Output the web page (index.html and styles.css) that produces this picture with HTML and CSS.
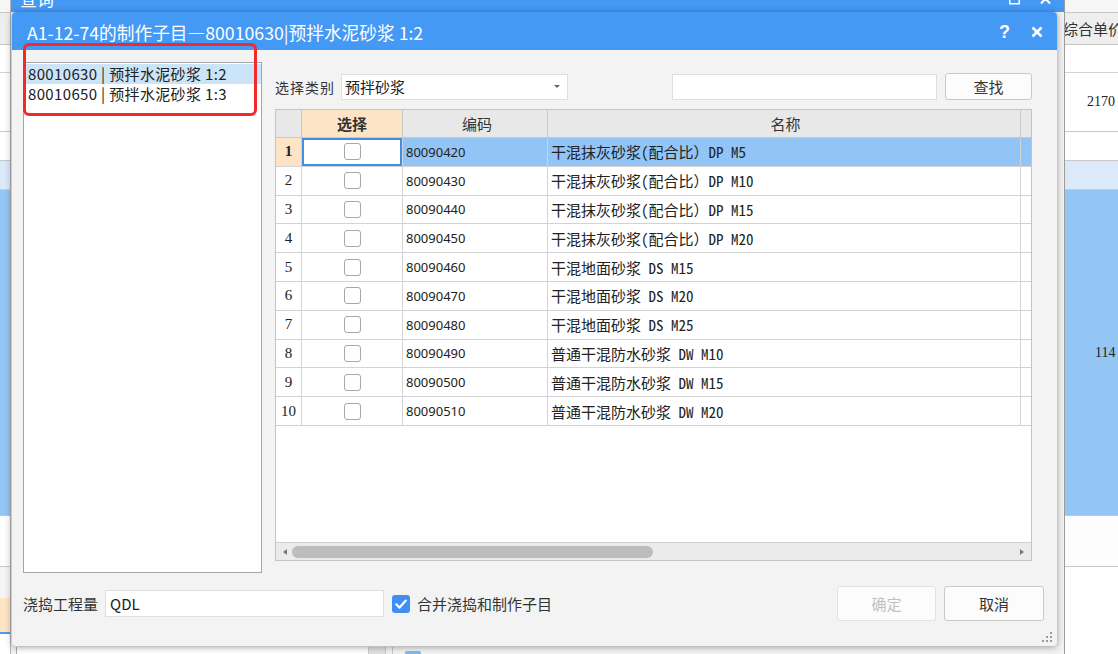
FILE: index.html
```html
<!DOCTYPE html>
<html lang="zh-CN">
<head>
<meta charset="utf-8">
<title>制作子目</title>
<link rel="stylesheet" href="styles.css">
</head>
<body>
<div class="app">
  <div class="app-top"></div>
  <div class="app-row app-head"><span></span><span class="app-txt">综合单价</span></div>
  <div class="app-row app-r1"></div>
  <div class="app-row app-r2"><span></span><span class="app-num n1">2170</span></div>
  <div class="app-row app-r3"></div>
  <div class="app-row app-r4"></div>
  <div class="app-row app-r5"><span></span><span class="app-num n2">114</span></div>
  <div class="app-row app-r6"></div>
  <div class="app-row app-r7"><span class="app-left l7"></span><span></span></div>
  <div class="app-row app-r8"><span class="app-left l8"></span><span></span></div>
  <div class="app-fill"></div>
</div>

<div class="outer">
  <div class="outer-title">
    <span class="outer-title-text">查询</span>
    <svg class="outer-icons" width="50" height="12" viewBox="0 0 50 12">
      <rect x="6.75" y="-6" width="9.5" height="9.75" fill="none" stroke="#fff" stroke-width="1.5"/>
      <path d="M38 -6 L47 3.5 M47 -6 L38 3.5" stroke="#fff" stroke-width="2" fill="none"/>
    </svg>
  </div>
  <div class="outer-body">
    <div class="outer-foot">
      <div class="outer-panel"><span class="outer-frag">清单工程量</span><span class="outer-btn"></span></div>
      <div class="outer-panel2"><span class="outer-ico"></span></div>
    </div>
  </div>
</div>

<div class="dialog">
  <div class="dlg-title">
    <span class="dlg-title-text">A1-12-74的制作子目—80010630|预拌水泥砂浆 1:2</span>
    <span class="dlg-help">?</span>
    <svg class="dlg-close" width="12" height="12" viewBox="0 0 12 12">
      <path d="M1.5 1.5 L10.5 10.5 M10.5 1.5 L1.5 10.5" stroke="#fff" stroke-width="2.6" fill="none"/>
    </svg>
  </div>
  <div class="dlg-body">
    <div class="main">
      <div class="list">
        <div class="list-item selected">80010630 | 预拌水泥砂浆 1:2</div>
        <div class="list-item">80010650 | 预拌水泥砂浆 1:3</div>
      </div>
      <div class="right">
        <div class="toolbar">
          <span class="tb-label">选择类别</span>
          <div class="combo"><span>预拌砂浆</span><i class="combo-arrow"></i></div>
          <div class="search"></div>
          <div class="btn find">查找</div>
        </div>
        <div class="table">
          <div class="trow thead">
            <div class="c c-no"></div>
            <div class="c c-sel hsel">选择</div>
            <div class="c c-code hc">编码</div>
            <div class="c c-name hc">名称</div>
            <div class="c c-x"></div>
          </div>
          <div class="trow active">
            <div class="c c-no">1</div>
            <div class="c c-sel"><span class="cb"></span></div>
            <div class="c c-code">80090420</div>
            <div class="c c-name">干混抹灰砂浆(配合比）DP M5</div>
            <div class="c c-x"></div>
          </div>
          <div class="trow">
            <div class="c c-no">2</div>
            <div class="c c-sel"><span class="cb"></span></div>
            <div class="c c-code">80090430</div>
            <div class="c c-name">干混抹灰砂浆(配合比）DP M10</div>
            <div class="c c-x"></div>
          </div>
          <div class="trow">
            <div class="c c-no">3</div>
            <div class="c c-sel"><span class="cb"></span></div>
            <div class="c c-code">80090440</div>
            <div class="c c-name">干混抹灰砂浆(配合比）DP M15</div>
            <div class="c c-x"></div>
          </div>
          <div class="trow">
            <div class="c c-no">4</div>
            <div class="c c-sel"><span class="cb"></span></div>
            <div class="c c-code">80090450</div>
            <div class="c c-name">干混抹灰砂浆(配合比）DP M20</div>
            <div class="c c-x"></div>
          </div>
          <div class="trow">
            <div class="c c-no">5</div>
            <div class="c c-sel"><span class="cb"></span></div>
            <div class="c c-code">80090460</div>
            <div class="c c-name">干混地面砂浆 DS M15</div>
            <div class="c c-x"></div>
          </div>
          <div class="trow">
            <div class="c c-no">6</div>
            <div class="c c-sel"><span class="cb"></span></div>
            <div class="c c-code">80090470</div>
            <div class="c c-name">干混地面砂浆 DS M20</div>
            <div class="c c-x"></div>
          </div>
          <div class="trow">
            <div class="c c-no">7</div>
            <div class="c c-sel"><span class="cb"></span></div>
            <div class="c c-code">80090480</div>
            <div class="c c-name">干混地面砂浆 DS M25</div>
            <div class="c c-x"></div>
          </div>
          <div class="trow">
            <div class="c c-no">8</div>
            <div class="c c-sel"><span class="cb"></span></div>
            <div class="c c-code">80090490</div>
            <div class="c c-name">普通干混防水砂浆 DW M10</div>
            <div class="c c-x"></div>
          </div>
          <div class="trow">
            <div class="c c-no">9</div>
            <div class="c c-sel"><span class="cb"></span></div>
            <div class="c c-code">80090500</div>
            <div class="c c-name">普通干混防水砂浆 DW M15</div>
            <div class="c c-x"></div>
          </div>
          <div class="trow">
            <div class="c c-no">10</div>
            <div class="c c-sel"><span class="cb"></span></div>
            <div class="c c-code">80090510</div>
            <div class="c c-name">普通干混防水砂浆 DW M20</div>
            <div class="c c-x"></div>
          </div>
          <div class="tspacer"></div>
          <div class="hscroll">
            <i class="arr-l"></i>
            <span class="thumb"></span>
            <i class="arr-r"></i>
          </div>
        </div>
      </div>
    </div>
    <div class="bottom">
      <span class="b-label">浇捣工程量</span>
      <div class="qty">QDL</div>
      <span class="chk">
        <svg width="18" height="18" viewBox="0 0 18 18"><path d="M4.2 9.2 L7.6 12.6 L13.8 5.6" stroke="#fff" stroke-width="2.2" fill="none" stroke-linecap="round" stroke-linejoin="round"/></svg>
      </span>
      <span class="chk-label">合并浇捣和制作子目</span>
      <div class="btn ok">确定</div>
      <div class="btn cancel">取消</div>
    </div>
  </div>
  <div class="redbox"></div>
  <svg class="grip" width="11" height="11" viewBox="0 0 11 11">
    <rect x="8" y="0" width="2" height="2" fill="#9a9a9a"/>
    <rect x="4" y="4" width="2" height="2" fill="#9a9a9a"/>
    <rect x="8" y="4" width="2" height="2" fill="#9a9a9a"/>
    <rect x="0" y="8" width="2" height="2" fill="#9a9a9a"/>
    <rect x="4" y="8" width="2" height="2" fill="#9a9a9a"/>
    <rect x="8" y="8" width="2" height="2" fill="#9a9a9a"/>
  </svg>
</div>
</body>
</html>
```

FILE: styles.css
```css
* { box-sizing: border-box; margin: 0; padding: 0; }
html, body { width: 1118px; height: 654px; overflow: hidden; }
body {
  position: relative;
  background: #fff;
  font-family: "Noto Sans CJK SC", "Microsoft YaHei", sans-serif;
  font-size: 15px;
  color: #333;
}

/* ---------- background application ---------- */
.app { display: flex; flex-direction: column; height: 654px; }
.app-top { height: 13px; background: #f6f6f6; border-bottom: 1px solid #c8c8c8; }
.app-row {
  display: grid;
  grid-template-columns: 1063px 1fr;
  align-items: center;
  border-bottom: 1px solid #d4d4d4;
  white-space: nowrap;
  overflow: hidden;
}
.app-head { height: 32px; background: #eeeeee; border-bottom-color: #c6c6c6; }
.app-txt { font-size: 15px; color: #333; }
.app-r1 { height: 28px; }
.app-r2 { height: 59px; border-bottom-color: #c8c8c8; }
.app-r3 { height: 29px; border-bottom-color: #c8c8c8; }
.app-r4 { height: 29px; background: #dce9fb; border-bottom-color: #c4cfdc; }
.app-r5 { height: 326px; background: #93c6f5; border-bottom-color: #c8c8c8; }
.app-r6 { height: 51px; background: #fdfdfd; border-bottom-color: #c8c8c8; }
.app-r7 { height: 31px; background: #fff; border-bottom: none; align-items: stretch; }
.app-r8 { height: 36px; background: #fff; border-bottom: none; align-items: stretch; }
.app-left { display: block; }
.l7 { background: #f4f4f4; }
.l8 { background: #fde4c4; border-bottom: 2px solid #4a9af5; }
.app-fill { flex: 1; background: #fff; }
.app-num { font-family: "Liberation Serif", serif; font-size: 14px; color: #222; }
.n1 { padding-left: 24px; }
.n2 { padding-left: 32px; }

/* ---------- outer window ---------- */
.outer {
  position: absolute;
  left: 10px; top: 0;
  width: 1055px; height: 654px;
  background: #f3f3f3;
  border-left: 1px solid #b4b4b4;
  border-right: 1px solid #9c9c9c;
  display: flex;
  flex-direction: column;
}
.outer-title {
  height: 12px;
  flex: none;
  background: #4499f5;
  color: #fff;
  display: flex;
  overflow: hidden;
  padding: 0 11px 0 9px;
}
.outer-title-text { font-size: 17px; line-height: 20px; margin-top: -11px; }
.outer-icons { margin-left: auto; }
.outer-body { flex: 1; padding-top: 635px; }
.outer-foot { display: flex; height: 10px; }
.outer-panel {
  margin-left: 5px;
  width: 370px;
  background: #fff;
  border-left: 1px solid #a8a8a8;
  border-right: 1px solid #c8c8c8;
  display: flex;
  overflow: hidden;
}
.outer-frag { font-size: 15px; line-height: 20px; margin-top: 4px; padding-left: 38px; color: #333; }
.outer-btn { margin-left: auto; width: 17px; background: #e2e2e2; border-left: 1px solid #ccc; }
.outer-panel2 { margin-left: 6px; border-left: 1px solid #c8c8c8; padding-left: 12px; }
.outer-ico { display: block; width: 16px; height: 10px; margin-top: 4px; background: #8ab8ec; border-radius: 2px; }

/* ---------- dialog ---------- */
.dialog {
  position: absolute;
  left: 12px; top: 12px;
  width: 1045px; height: 634px;
  background: #f3f3f3;
  border-radius: 4px;
  box-shadow: 0 1px 7px rgba(0,0,0,.38);
  display: flex;
  flex-direction: column;
  overflow: hidden;
}
.dlg-title {
  height: 38px;
  flex: none;
  background: #4499f5;
  color: #fff;
  display: flex;
  align-items: center;
  padding: 2px 14px 0 15px;
}
.dlg-title-text { font-size: 17.7px; white-space: nowrap; }
.dlg-help {
  margin-left: auto;
  font-family: "Liberation Sans", sans-serif;
  font-weight: bold;
  font-size: 18px;
  line-height: 18px;
}
.dlg-close { margin-left: 21px; }

.dlg-body {
  flex: 1;
  display: flex;
  flex-direction: column;
  padding: 12px 13px 0 11px;
}
.main { display: flex; gap: 13px; height: 511px; }

.list {
  width: 239px;
  border: 1px solid #a6a6a6;
  background: #fff;
  padding-top: 1px;
}
.list-item {
  height: 20px;
  line-height: 20px;
  padding-left: 4px;
  font-size: 15px;
  letter-spacing: 0.35px;
  color: #222;
  white-space: nowrap;
}
.list-item.selected { background: #cce4f7; }

.right { width: 757px; display: flex; flex-direction: column; }
.toolbar { margin-top: 11px; height: 27px; display: flex; align-items: center; }
.tb-label { font-size: 14px; color: #333; letter-spacing: 1px; }
.combo {
  margin-left: 6px;
  width: 227px; height: 26px;
  background: #fff;
  border: 1px solid #dedede;
  display: flex;
  align-items: center;
  padding-left: 3px;
  font-size: 15px;
  color: #222;
}
.combo-arrow {
  margin-left: auto;
  margin-right: 7px;
  border-left: 3px solid transparent;
  border-right: 3px solid transparent;
  border-top: 3px solid #666;
}
.search {
  margin-left: auto;
  width: 265px; height: 26px;
  background: #fff;
  border: 1px solid #dedede;
}
.btn {
  background: #fcfcfc;
  border: 1px solid #c9c9c9;
  border-radius: 3px;
  display: flex;
  align-items: center;
  justify-content: center;
  font-size: 15px;
  color: #333;
}
.find { margin-left: 8px; width: 87px; height: 27px; }

.table {
  margin-top: 9px;
  height: 452px;
  border: 1px solid #c4c4c4;
  background: #fff;
  display: flex;
  flex-direction: column;
  overflow: hidden;
}
.trow {
  display: grid;
  grid-template-columns: 26px 101px 145px 473px 10px;
  height: 28.8px;
  flex: none;
}
.c {
  border-right: 1px solid #d3d3d3;
  border-bottom: 1px solid #d3d3d3;
  display: flex;
  align-items: center;
  white-space: nowrap;
  overflow: hidden;
}
.c-x { border-right: none; }
.thead { height: 28px; }
.thead .c { background: #e8e8e8; border-color: #c9c9c9; justify-content: center; font-size: 15px; color: #333; }
.thead .hsel { background: #fde4c4; font-weight: bold; }
.c-no {
  justify-content: center;
  font-family: "Liberation Serif", serif;
  font-size: 15px;
  color: #222;
}
.c-sel { justify-content: center; }
.cb {
  width: 17px; height: 17px;
  border: 1px solid #a8a8a8;
  border-radius: 3px;
  background: #fff;
}
.c-code {
  padding-left: 3px;
  font-family: "Noto Sans", sans-serif;
  font-size: 13px;
  color: #222;
}
.c-name {
  padding-left: 3px;
  font-family: "Noto Sans Mono CJK SC", "Noto Sans CJK SC", monospace;
  font-size: 15px;
  color: #222;
}
.active .c-no { background: #fde4c4; font-weight: bold; }
.active .c-sel { box-shadow: inset 0 0 0 2px #4190e8; }
.active .c-code, .active .c-name, .active .c-x { background: #92c5f5; }

.tspacer { flex: 1; background: #fff; }
.hscroll {
  height: 18px;
  flex: none;
  background: #ebebeb;
  border-top: 1px solid #d0d0d0;
  display: flex;
  align-items: center;
  padding: 0 7px;
}
.arr-l {
  border-top: 3.5px solid transparent;
  border-bottom: 3.5px solid transparent;
  border-right: 4px solid #7a7a7a;
}
.arr-r {
  margin-left: auto;
  border-top: 3.5px solid transparent;
  border-bottom: 3.5px solid transparent;
  border-left: 4px solid #7a7a7a;
}
.thumb {
  margin-left: 5px;
  width: 361px; height: 12px;
  border-radius: 6px;
  background: #bdbdbd;
}

.bottom { margin-top: 13px; height: 35px; display: flex; align-items: center; }
.b-label { width: 82px; font-size: 15px; color: #333; }
.qty {
  width: 279px; height: 27px;
  background: #fff;
  border: 1px solid #dedede;
  padding-left: 4px;
  display: flex;
  align-items: center;
  font-size: 15px;
  color: #222;
}
.chk {
  margin-left: 8px;
  width: 18px; height: 18px;
  border-radius: 3px;
  background: #3f8ef2;
  display: flex;
}
.chk-label { margin-left: 7px; font-size: 15px; color: #333; }
.ok { margin-left: auto; width: 99px; height: 35px; color: #c0c0c0; border-color: #e2e2e2; }
.cancel { margin-left: 8px; width: 100px; height: 35px; }

.redbox {
  position: absolute;
  left: 11px; top: 31px;
  width: 234px; height: 73px;
  border: 3px solid #f22a2a;
  border-radius: 6px;
}
.grip { position: absolute; right: 4px; bottom: 3px; }
```
